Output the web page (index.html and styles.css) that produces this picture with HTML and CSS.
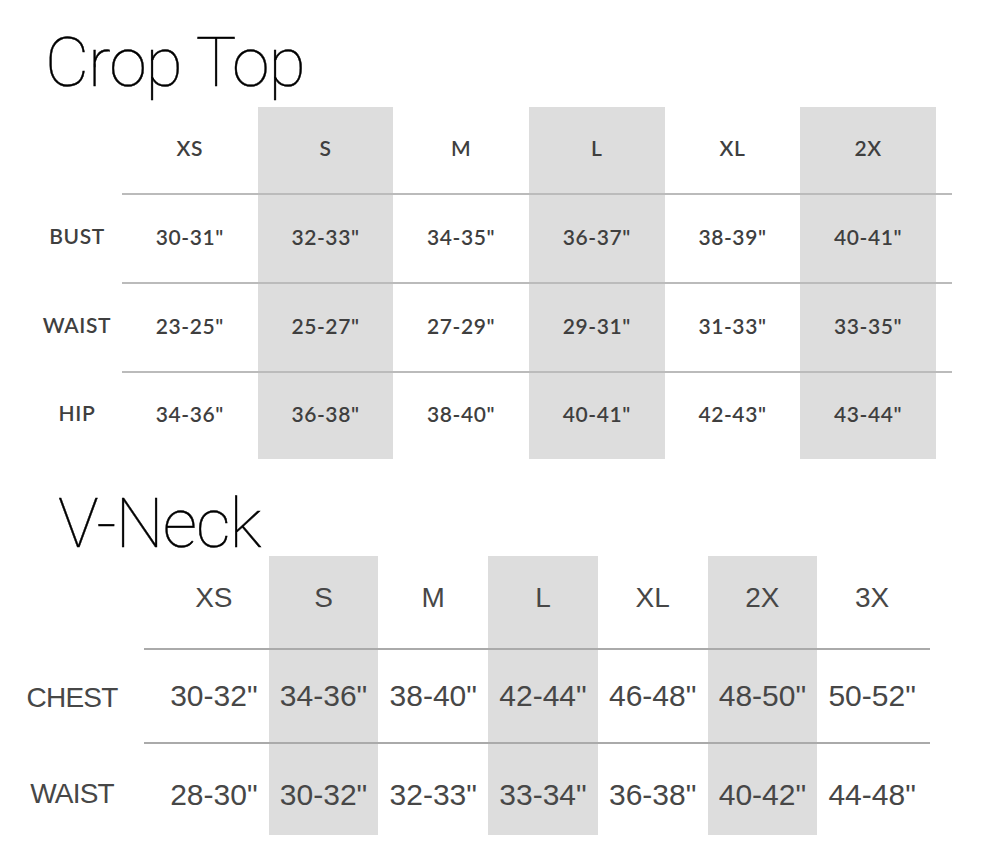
FILE: index.html
```html
<!DOCTYPE html>
<html lang="en">
<head>
<meta charset="utf-8">
<title>Size Charts</title>
<link rel="stylesheet" href="styles.css">
</head>
<body>
<h1 class="title title-crop">Crop Top</h1>
<div class="chart chart-crop">
  <div class="row head">
    <div class="label"></div>
    <div class="cells">
      <div class="cell">XS</div><div class="cell shade">S</div><div class="cell">M</div><div class="cell shade">L</div><div class="cell">XL</div><div class="cell shade">2X</div>
    </div>
  </div>
  <div class="row">
    <div class="label">BUST</div>
    <div class="cells">
      <div class="cell">30-31"</div><div class="cell shade">32-33"</div><div class="cell">34-35"</div><div class="cell shade">36-37"</div><div class="cell">38-39"</div><div class="cell shade">40-41"</div>
    </div>
  </div>
  <div class="row">
    <div class="label">WAIST</div>
    <div class="cells">
      <div class="cell">23-25"</div><div class="cell shade">25-27"</div><div class="cell">27-29"</div><div class="cell shade">29-31"</div><div class="cell">31-33"</div><div class="cell shade">33-35"</div>
    </div>
  </div>
  <div class="row last">
    <div class="label">HIP</div>
    <div class="cells">
      <div class="cell">34-36"</div><div class="cell shade">36-38"</div><div class="cell">38-40"</div><div class="cell shade">40-41"</div><div class="cell">42-43"</div><div class="cell shade">43-44"</div>
    </div>
  </div>
</div>

<h1 class="title title-vneck">V-Neck</h1>
<div class="chart chart-vneck">
  <div class="row head">
    <div class="label"></div>
    <div class="cells">
      <div class="cell">XS</div><div class="cell shade">S</div><div class="cell">M</div><div class="cell shade">L</div><div class="cell">XL</div><div class="cell shade">2X</div><div class="cell">3X</div>
    </div>
  </div>
  <div class="row r1">
    <div class="label">CHEST</div>
    <div class="cells">
      <div class="cell">30-32"</div><div class="cell shade">34-36"</div><div class="cell">38-40"</div><div class="cell shade">42-44"</div><div class="cell">46-48"</div><div class="cell shade">48-50"</div><div class="cell">50-52"</div>
    </div>
  </div>
  <div class="row r2">
    <div class="label">WAIST</div>
    <div class="cells">
      <div class="cell">28-30"</div><div class="cell shade">30-32"</div><div class="cell">32-33"</div><div class="cell shade">33-34"</div><div class="cell">36-38"</div><div class="cell shade">40-42"</div><div class="cell">44-48"</div>
    </div>
  </div>
</div>
</body>
</html>
```

FILE: styles.css
```css
body {
  margin: 0;
  background: #ffffff;
}

.title {
  font-family: Roboto, "Liberation Sans", sans-serif;
  font-weight: 100;
  font-size: 68px;
  line-height: 68px;
  letter-spacing: -1px;
  color: #000000;
  margin: 0;
  -webkit-text-stroke: 0.4px #000000;
}

.title-crop {
  margin: 29px 0 10px 45px;
}

.title-vneck {
  margin: 31px 0 -2px 58px;
}

.row {
  display: grid;
}

.label,
.cell {
  display: flex;
  align-items: center;
  justify-content: center;
  white-space: nowrap;
}

.cells {
  display: grid;
}

.shade {
  background: #dddddd;
}

/* Crop top chart */
.chart-crop {
  margin-left: 32px;
  width: 920px;
  font-family: Lato, "Open Sans", sans-serif;
  font-weight: 600;
  font-size: 21px;
  letter-spacing: 0.6px;
  color: #3f3f3f;
}

.chart-crop .row {
  grid-template-columns: 90px 1fr;
  height: 89px;
}

.chart-crop .row.head {
  height: 86px;
}

.chart-crop .label,
.chart-crop .cell {
  padding-bottom: 5px;
}

.chart-crop .cells {
  grid-template-columns: repeat(6, 1fr);
  padding-right: 16px;
  border-top: 2px solid #bbbbbb;
}

.chart-crop .head .cells {
  border-top: none;
}

.chart-crop .row.last {
  height: 88px;
}

/* V-neck chart */
.chart-vneck {
  width: 930px;
  font-family: "Liberation Sans", Arial, sans-serif;
  font-size: 30px;
  color: #474747;
}

.chart-vneck .row {
  grid-template-columns: 144px 1fr;
}

.chart-vneck .row.head {
  height: 92px;
}

.chart-vneck .row.r1 {
  height: 94px;
}

.chart-vneck .row.r2 {
  height: 93px;
}

.chart-vneck .cells {
  grid-template-columns: repeat(7, 1fr);
  padding: 0 3px 0 15px;
  border-top: 2px solid #aaaaaa;
}

.chart-vneck .head .cells {
  border-top: none;
}

.chart-vneck .head .cell {
  font-size: 28px;
  padding-bottom: 8px;
}

.chart-vneck .label {
  font-size: 28px;
  letter-spacing: -0.8px;
}

.chart-vneck .r1 .label {
  padding-top: 6px;
}

.chart-vneck .r2 .cell,
.chart-vneck .r2 .label {
  padding-top: 10px;
}
```
